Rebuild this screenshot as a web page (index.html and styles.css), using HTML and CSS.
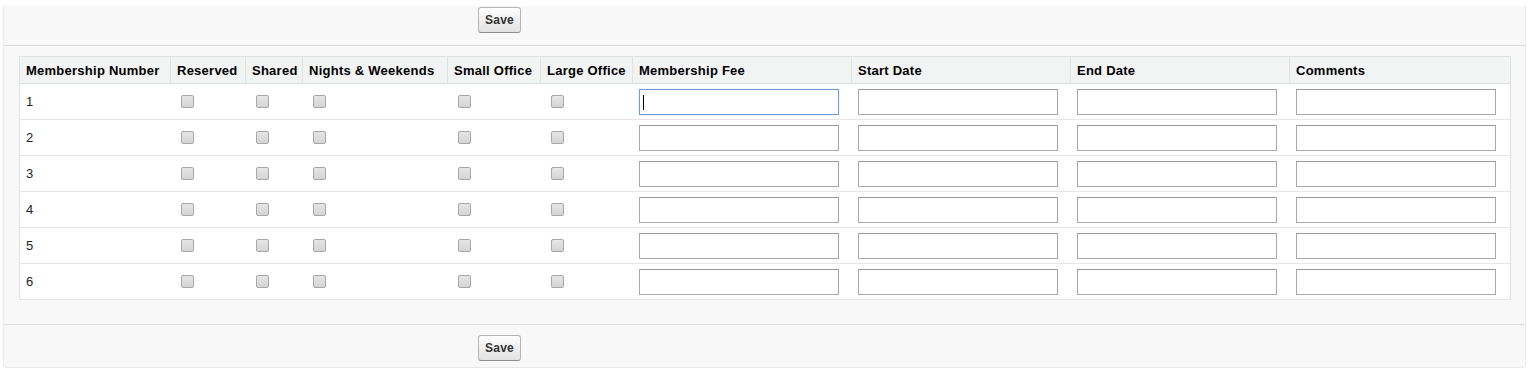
FILE: index.html
```html
<!DOCTYPE html>
<html lang="en">
<head>
    <meta charset="UTF-8">
    <title>Memberships</title>
    <link rel="stylesheet" href="styles.css">
</head>
<body>
    <div class="page-block">
        <div class="button-bar top">
            <button class="btn">Save</button>
        </div>

        <div class="block-body">
            <table class="list">
                <colgroup>
                    <col style="width: 151px">
                    <col style="width: 75px">
                    <col style="width: 57px">
                    <col style="width: 145px">
                    <col style="width: 93px">
                    <col style="width: 92px">
                    <col style="width: 219px">
                    <col style="width: 219px">
                    <col style="width: 219px">
                    <col style="width: 221px">
                </colgroup>
                <thead>
                    <tr>
                        <th>Membership Number</th>
                        <th>Reserved</th>
                        <th>Shared</th>
                        <th>Nights &amp; Weekends</th>
                        <th>Small Office</th>
                        <th>Large Office</th>
                        <th>Membership Fee</th>
                        <th>Start Date</th>
                        <th>End Date</th>
                        <th>Comments</th>
                    </tr>
                </thead>
                <tbody id="rows"></tbody>
            </table>
        </div>

        <div class="button-bar bottom">
            <button class="btn">Save</button>
        </div>
    </div>

    <script>
        // build the six membership rows
        const tbody = document.getElementById('rows');
        for (let i = 1; i <= 6; i++) {
            const tr = document.createElement('tr');
            let html = '<td class="num">' + i + '</td>';
            for (let c = 0; c < 5; c++) {
                html += '<td><input type="checkbox" class="check"></td>';
            }
            for (let f = 0; f < 4; f++) {
                const focused = (i === 1 && f === 0) ? ' is-focused' : '';
                html += '<td><input type="text" class="field' + focused + '"></td>';
            }
            tr.innerHTML = html;
            tbody.appendChild(tr);
        }
    </script>
</body>
</html>
```

FILE: styles.css
```css
body {
    margin: 6px 6px 0 3px;
    background: #fff;
    font-family: "Liberation Sans", Arial, sans-serif;
    font-size: 12px;
    color: #000;
}

.page-block {
    background: #f8f8f8;
    border: 1px solid #eaeaea;
    border-top: none;
    border-radius: 0 0 4px 4px;
}

.button-bar {
    padding-left: 474px;
}

.button-bar.top {
    padding-top: 1px;
    padding-bottom: 12px;
    border-bottom: 1px solid #dbdbdb;
}

.button-bar.bottom {
    padding-top: 10px;
    padding-bottom: 6px;
    border-top: 1px solid #dbdbdb;
}

.btn {
    display: block;
    box-sizing: border-box;
    width: 43px;
    height: 26px;
    padding: 0;
    font-family: inherit;
    font-size: 12px;
    font-weight: bold;
    letter-spacing: 0.2px;
    color: #333;
    background: linear-gradient(to bottom, #ffffff, #ececec 60%, #e2e2e2);
    border: 1px solid #b5b5b5;
    border-bottom-color: #8f8f8f;
    border-radius: 3px;
}

.block-body {
    padding: 10px 15px 24px 15px;
}

.list {
    width: 1491px;
    table-layout: fixed;
    border-collapse: collapse;
    background: #fff;
    border: 1px solid #e0e3e5;
}

.list th {
    height: 26px;
    padding: 0 2px 0 6px;
    text-align: left;
    font-weight: bold;
    font-size: 13px;
    letter-spacing: 0.25px;
    white-space: nowrap;
    background: #f2f3f3;
    border-left: 1px solid #e0e3e5;
    border-bottom: 1px solid #e0e3e5;
}

.list th:first-child {
    border-left: none;
}

.list td {
    height: 35px;
    padding: 0 2px 0 6px;
    vertical-align: middle;
    border-bottom: 1px solid #e6e6e6;
}

.list td.num {
    font-size: 13px;
    color: #222;
}

.check {
    appearance: none;
    -webkit-appearance: none;
    display: block;
    box-sizing: border-box;
    width: 13px;
    height: 13px;
    margin: 0 0 0 4px;
    border: 1px solid #a8a8a8;
    border-radius: 2px;
    background: linear-gradient(to bottom, #e6e6e6, #d4d4d4);
}

.field {
    display: block;
    box-sizing: border-box;
    width: 200px;
    height: 26px;
    margin: 0;
    padding: 2px 4px;
    font-family: inherit;
    font-size: 13px;
    border: 1px solid #a9a9a9;
    border-top-color: #999;
    border-radius: 0;
    background: #fff;
    outline: none;
}

.field.is-focused {
    border-color: #6f9bd6;
    box-shadow: 0 0 1px #b9d0ee;
    background: #fff linear-gradient(#000, #000) no-repeat 3px 5px / 1px 15px;
}
```
